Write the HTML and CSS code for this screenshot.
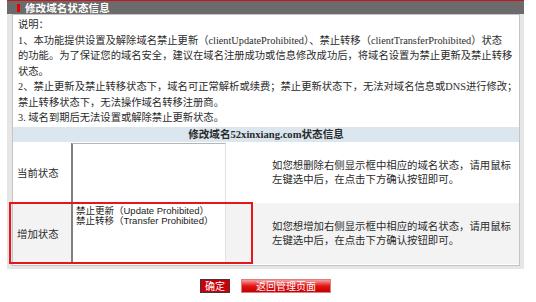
FILE: index.html
```html
<!DOCTYPE html>
<html lang="zh-CN">
<head>
    <meta charset="UTF-8">
    <title>修改域名状态信息</title>
    <link rel="stylesheet" href="styles.css">
</head>
<body>
    <div class="panel">
        <div class="panel-hd"><span class="mark"></span>修改域名状态信息</div>
        <div class="panel-bd">
            <div class="panel-inner">
                <div class="notes">
                    <p>说明：</p>
                    <p>1、本功能提供设置及解除域名禁止更新（clientUpdateProhibited）、禁止转移（clientTransferProhibited）状态<br>的功能。为了保证您的域名安全，建议在域名注册成功或信息修改成功后，将域名设置为禁止更新及禁止转移<br>状态。</p>
                    <p>2、禁止更新及禁止转移状态下，域名可正常解析或续费；禁止更新状态下，无法对域名信息或DNS进行修改；<br>禁止转移状态下，无法操作域名转移注册商。</p>
                    <p>3. 域名到期后无法设置或解除禁止更新状态。</p>
                </div>

                <table class="status-table">
                    <tr>
                        <th colspan="4">修改域名52xinxiang.com状态信息</th>
                    </tr>
                    <tr class="row-cur">
                        <td class="label">当前状态</td>
                        <td class="box"><div class="listbox"></div></td>
                        <td class="gap"></td>
                        <td class="tip">如您想删除右侧显示框中相应的域名状态，请用鼠标左键选中后，在点击下方确认按钮即可。</td>
                    </tr>
                    <tr class="row-add">
                        <td class="label">增加状态<div class="highlight"></div></td>
                        <td class="box">
                            <div class="listbox">
                                <div>禁止更新（Update Prohibited）</div>
                                <div>禁止转移（Transfer Prohibited）</div>
                            </div>
                        </td>
                        <td class="gap"></td>
                        <td class="tip">如您想增加右侧显示框中相应的域名状态，请用鼠标左键选中后，在点击下方确认按钮即可。</td>
                    </tr>
                </table>
            </div>
        </div>

        <div class="actions">
            <button class="btn btn-ok">确定</button>
            <button class="btn btn-back">返回管理页面</button>
        </div>
    </div>
</body>
</html>
```

FILE: styles.css
```css
body {
    margin: 0;
    background: #fff;
    font-family: 'Liberation Serif', 'Noto Sans CJK SC', serif;
    font-size: 10.4px;
    color: #2b2b2b;
}

.panel {
    width: 517px;
    margin-left: 7px;
}

.panel-hd {
    height: 13px;
    border-top: 1px solid #c41a1f;
    background: #6b6b6b;
    color: #fff;
    font-family: 'Noto Sans CJK SC', sans-serif;
    font-weight: bold;
    font-size: 10.6px;
    line-height: 13px;
    display: flex;
    align-items: center;
    gap: 5px;
    padding-left: 10px;
}

.mark {
    width: 3px;
    height: 8px;
    background: #e60000;
}

.panel-bd {
    background: #e6e6e6;
    padding: 0 4px 3px 5px;
}

.panel-inner {
    background: #fff;
    border: 1px solid #c4c4c4;
    padding-bottom: 1px;
}

.notes {
    padding: 2px 5px 1px;
    font-size: 10.3px;
    line-height: 15.5px;
    white-space: nowrap;
}

.notes p {
    margin: 0;
}

.status-table {
    width: 100%;
    border-collapse: collapse;
}

.status-table th {
    height: 15px;
    padding: 0;
    background: #dce6ef;
    font-size: 10.6px;
    font-weight: bold;
    line-height: 15px;
    text-align: center;
}

.status-table td {
    padding: 0;
    height: 61px;
}

.row-add td {
    background: #f3f3f3;
}

.label {
    width: 53px;
    padding-left: 4px !important;
    font-family: 'Noto Sans CJK SC', sans-serif;
    position: relative;
}

.box {
    width: 156px;
    vertical-align: top;
}

.gap {
    width: 40px;
}

.tip {
    padding-left: 6px !important;
    font-family: 'Noto Sans CJK SC', sans-serif;
    line-height: 14px;
}

.listbox {
    box-sizing: border-box;
    height: 61px;
    margin-left: 1px;
    padding: 2px 3px;
    background: #fff;
    border: 1px solid #b5b5b5;
    border-left: 2px solid #808080;
    border-right-color: #e2e2e2;
    border-bottom-color: #e2e2e2;
    font-family: 'Liberation Sans', 'Noto Sans CJK SC', sans-serif;
    font-size: 9.5px;
    line-height: 10px;
    color: #222;
}

.row-cur .listbox {
    margin-top: 1px;
    height: 60px;
}

.highlight {
    position: absolute;
    left: -4px;
    top: -1px;
    width: 244px;
    height: 62px;
    box-sizing: border-box;
    border: 2px solid #e8151b;
    pointer-events: none;
}

.actions {
    display: flex;
    justify-content: center;
    gap: 11px;
    margin-top: 10px;
}

.btn {
    height: 14px;
    padding: 0;
    color: #fff;
    font-family: 'Noto Sans CJK SC', sans-serif;
    font-size: 10px;
    line-height: 12px;
    cursor: pointer;
}

.btn-ok {
    width: 30px;
    background: #c8000a;
    border: 1px solid #3a3a3a;
}

.btn-back {
    width: 90px;
    background: linear-gradient(#f4a0a0, #e41414 50%, #c40000);
    border: 1px solid #d98080;
}
```
